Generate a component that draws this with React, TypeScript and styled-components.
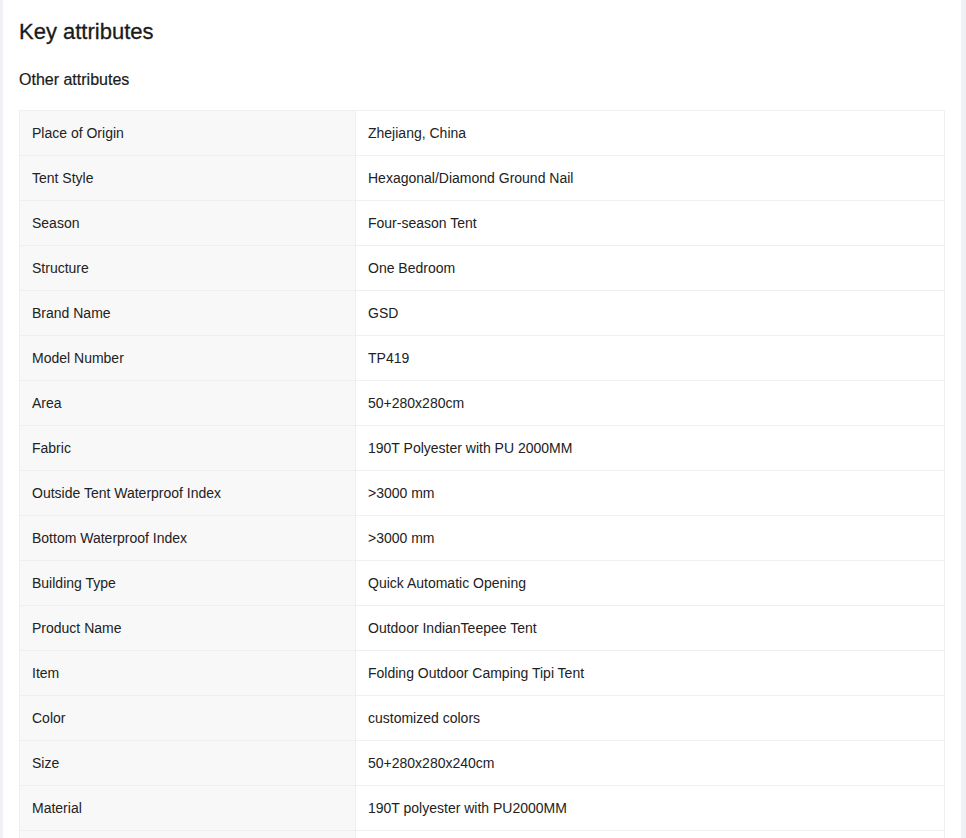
import React from 'react';
import styled, {createGlobalStyle} from "styled-components";

const attributes: [string, string][] = [
    ['Place of Origin', 'Zhejiang, China'],
    ['Tent Style', 'Hexagonal/Diamond Ground Nail'],
    ['Season', 'Four-season Tent'],
    ['Structure', 'One Bedroom'],
    ['Brand Name', 'GSD'],
    ['Model Number', 'TP419'],
    ['Area', '50+280x280cm'],
    ['Fabric', '190T Polyester with PU 2000MM'],
    ['Outside Tent Waterproof Index', '>3000 mm'],
    ['Bottom Waterproof Index', '>3000 mm'],
    ['Building Type', 'Quick Automatic Opening'],
    ['Product Name', 'Outdoor IndianTeepee Tent'],
    ['Item', 'Folding Outdoor Camping Tipi Tent'],
    ['Color', 'customized colors'],
    ['Size', '50+280x280x240cm'],
    ['Material', '190T polyester with PU2000MM'],
    ['Usage', 'Outdoor Camping'],
];

const GlobalStyle = createGlobalStyle`
  body {
    margin: 0;
    background: #f0f1f4;
    font-family: "Liberation Sans", Arial, sans-serif;
    color: #222;
  }
`

function App() {
    return (
        <>
            <GlobalStyle/>
            <Panel>
                <Title>Key attributes</Title>
                <SubTitle>Other attributes</SubTitle>
                <Table>
                    <tbody>
                    {attributes.map(([label, value]) => (
                        <tr key={label}>
                            <LabelCell>{label}</LabelCell>
                            <ValueCell>{value}</ValueCell>
                        </tr>
                    ))}
                    </tbody>
                </Table>
            </Panel>
        </>
    );
}

const Panel = styled.section`
  margin-left: 3px;
  width: 958px;
  box-sizing: border-box;
  padding: 17px 16px 24px;
  background: #fff;
`

const Title = styled.h2`
  margin: 0;
  
  font-size: 22px;
  line-height: 30px;
  font-weight: 500;
  color: #1a1a1a;
  -webkit-text-stroke: 0.3px #1a1a1a;
`

const SubTitle = styled.h3`
  margin: 22px 0 19px;
  
  font-size: 16px;
  line-height: 22px;
  font-weight: 500;
  color: #1a1a1a;
  -webkit-text-stroke: 0.2px #1a1a1a;
`

const Table = styled.table`
  width: 100%;
  border-collapse: collapse;
  table-layout: fixed;
  border: 1px solid #efefef;
`

const Cell = styled.td`
  height: 45px;
  padding: 0 12px;
  box-sizing: border-box;
  border: 1px solid #efefef;
  
  font-size: 14px;
  line-height: 20px;
  color: #222;
  vertical-align: middle;
`

const LabelCell = styled(Cell)`
  width: 336px;
  background: #f8f8f8;
`

const ValueCell = styled(Cell)`
  background: #fff;
`

export default App;
